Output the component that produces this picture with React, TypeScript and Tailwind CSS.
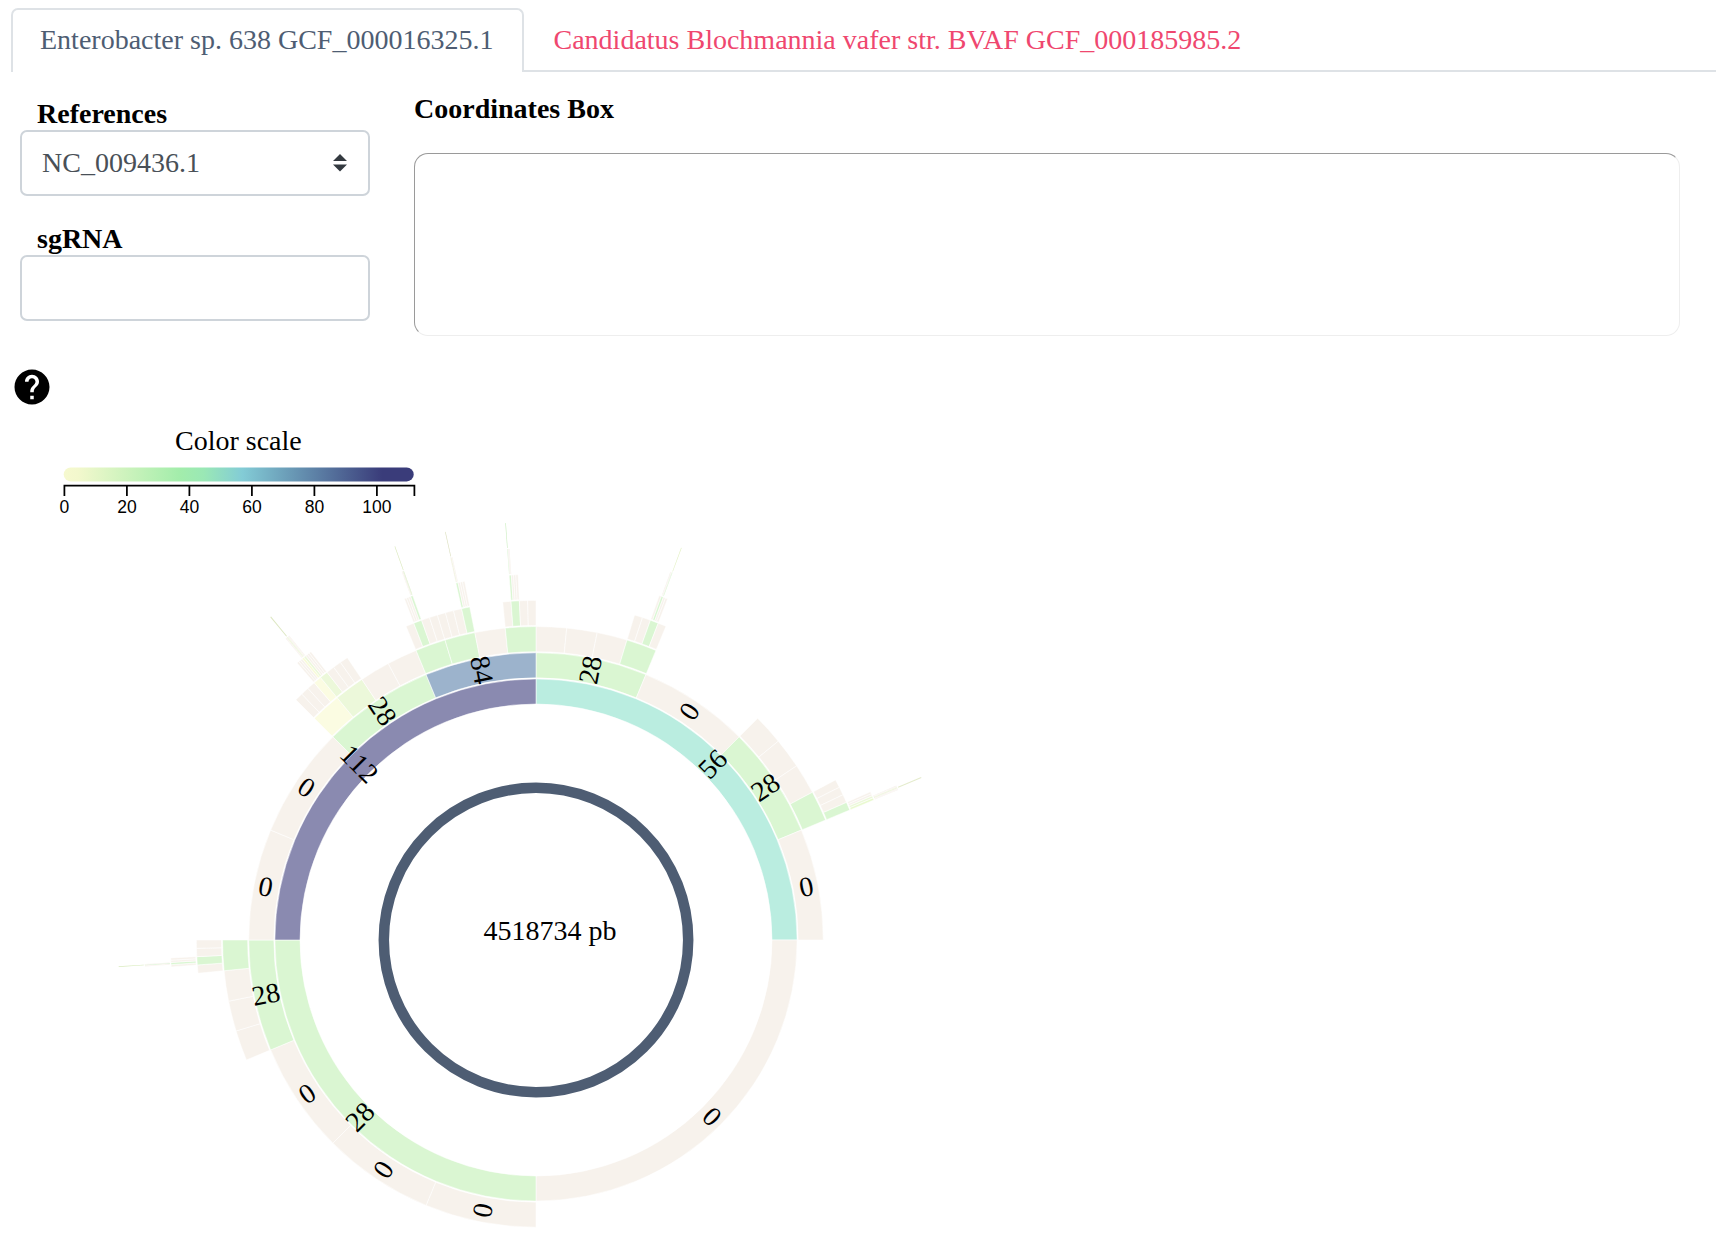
import React from "react";
import { MdHelp } from "react-icons/md";

const BEIGE = "#f7f2ec";
const GREEN = "#daf6d2";
const TEAL = "#baede0";
const BLUE = "#9cb3cc";
const PURPLE = "#8a8ab0";
const YELLOW = "#fbfce2";
const LIME = "#ecf8da";

const CX = 536;
const CY = 530;
const Q = 22.5;
const S = Q / 4;
const T = S / 4;
const U = T / 4;
const V = U / 4;

type Arc = { ring: number; from: number; step: number; fills: string[] };

// Each entry is a run of equal slices, clockwise from twelve o'clock.
const arcs: Arc[] = [
  { ring: 0, from: 0, step: 90, fills: [TEAL, BEIGE, GREEN, PURPLE] },
  { ring: 1, from: 0, step: Q, fills: [GREEN, BEIGE, GREEN, BEIGE] },
  {
    ring: 1,
    from: 180,
    step: Q,
    fills: [BEIGE, BEIGE, BEIGE, GREEN, BEIGE, BEIGE, GREEN, BLUE],
  },
  { ring: 2, from: 0, step: S, fills: [BEIGE, BEIGE, BEIGE, GREEN] },
  { ring: 2, from: 45, step: S, fills: [BEIGE, BEIGE, BEIGE, GREEN] },
  { ring: 2, from: 247.5, step: S, fills: [BEIGE, BEIGE, BEIGE, GREEN] },
  {
    ring: 2,
    from: 315,
    step: S,
    fills: [YELLOW, LIME, BEIGE, BEIGE, GREEN, GREEN, BEIGE, GREEN],
  },
  { ring: 3, from: 3 * S, step: T, fills: [BEIGE, BEIGE, GREEN, BEIGE] },
  { ring: 3, from: 45 + 3 * S, step: T, fills: [BEIGE, BEIGE, BEIGE, GREEN] },
  { ring: 3, from: 247.5 + 3 * S, step: T, fills: [BEIGE, GREEN, BEIGE, BEIGE] },
  {
    ring: 3,
    from: 315,
    step: T,
    fills: [BEIGE, BEIGE, BEIGE, YELLOW, LIME, BEIGE, BEIGE, BEIGE],
  },
  {
    ring: 3,
    from: 337.5,
    step: T,
    fills: [BEIGE, GREEN, BEIGE, BEIGE, BEIGE, BEIGE, BEIGE, GREEN],
  },
  { ring: 3, from: 360 - S, step: T, fills: [BEIGE, GREEN, BEIGE, BEIGE] },
  { ring: 4, from: 3 * S + 2 * T, step: U, fills: [BEIGE, GREEN, BEIGE, BEIGE] },
  { ring: 4, from: 67.5 - T, step: U, fills: [BEIGE, BEIGE, LIME, "#e9f9cf"] },
  { ring: 4, from: 247.5 + 3 * S + T, step: U, fills: [BEIGE, GREEN, BEIGE, BEIGE] },
  {
    ring: 4,
    from: 315 + 3 * T,
    step: U,
    fills: [BEIGE, BEIGE, BEIGE, "#f8fbd8", LIME, BEIGE, BEIGE, BEIGE],
  },
  { ring: 4, from: 337.5 + T, step: U, fills: [BEIGE, BEIGE, BEIGE, GREEN] },
  { ring: 4, from: 348.75 - T, step: U, fills: [GREEN, BEIGE, BEIGE, BEIGE] },
  { ring: 4, from: 360 - S + T, step: U, fills: [GREEN, BEIGE, BEIGE, BEIGE] },
];

// The two outermost rings hold slices under three pixels wide.
const slivers: Arc[] = [
  { ring: 5, from: 3 * S + 2 * T + U, step: V, fills: [BEIGE, BEIGE, BEIGE, GREEN] },
  {
    ring: 5,
    from: 67.5 - 2 * U,
    step: V,
    fills: [BEIGE, BEIGE, BEIGE, "#eaf3d2", "#e8f2cf", BEIGE, BEIGE, BEIGE],
  },
  { ring: 5, from: 247.5 + 3 * S + T + U, step: V, fills: [BEIGE, BEIGE, "#c8f0c0", BEIGE] },
  {
    ring: 5,
    from: 320.625 - U,
    step: V,
    fills: [BEIGE, BEIGE, BEIGE, "#eaf3d2", LIME, BEIGE, BEIGE, BEIGE],
  },
  { ring: 5, from: 337.5 + 2 * T - U, step: V, fills: [BEIGE, BEIGE, "#e6ecd2", "#dceec8"] },
  { ring: 5, from: 348.75 - T, step: V, fills: [BEIGE, "#e8efcf", BEIGE, BEIGE] },
  { ring: 5, from: 360 - S + T, step: V, fills: [GREEN, BEIGE, BEIGE, BEIGE] },
  { ring: 6, from: 3 * S + 2 * T + U + 3 * V, step: V, fills: ["#dfefba"] },
  { ring: 6, from: 67.5 - U - V, step: V * 1.7, fills: ["#e2eac8"] },
  { ring: 6, from: 247.5 + 3 * S + T + U + 2 * V, step: V, fills: ["#d2e8b2"] },
  { ring: 6, from: 320.625 - V, step: V * 1.7, fills: ["#dce6c0"] },
  { ring: 6, from: 337.5 + 2 * T - V, step: V, fills: ["#d6e6b4"] },
  { ring: 6, from: 348.75 - T + V, step: V, fills: ["#d8dcb8"] },
  { ring: 6, from: 360 - S + T, step: V, fills: ["#c4ecb8"] },
];

const labels: [number, number, string][] = [
  [0, 45, "56"],
  [0, 135, "0"],
  [0, 225, "28"],
  [0, 315, "112"],
  [1, 11.25, "28"],
  [1, 33.75, "0"],
  [1, 56.25, "28"],
  [1, 78.75, "0"],
  [1, 191.25, "0"],
  [1, 213.75, "0"],
  [1, 236.25, "0"],
  [1, 258.75, "28"],
  [1, 281.25, "0"],
  [1, 303.75, "0"],
  [1, 326.25, "28"],
  [1, 348.75, "84"],
];

function point(r: number, deg: number) {
  const a = (deg * Math.PI) / 180;
  return `${(r * Math.sin(a)).toFixed(3)} ${(-r * Math.cos(a)).toFixed(3)}`;
}

function slicePath(ring: number, a0: number, a1: number) {
  const r0 = 236 + ring * 26.17;
  const r1 = 261.1 + ring * 26.17;
  return `M${point(r0, a0)}L${point(r1, a0)}A${r1} ${r1} 0 0 1 ${point(r1, a1)}L${point(r0, a1)}A${r0} ${r0} 0 0 0 ${point(r0, a0)}Z`;
}

function Slices({ items, strokeWidth }: { items: Arc[]; strokeWidth: number }) {
  return (
    <g stroke="#fff" strokeOpacity={0.6} strokeWidth={strokeWidth}>
      {items.flatMap((arc, i) =>
        arc.fills.map((fill, j) => (
          <path
            key={`${i}-${j}`}
            fill={fill}
            d={slicePath(arc.ring, arc.from + j * arc.step, arc.from + (j + 1) * arc.step)}
          />
        )),
      )}
    </g>
  );
}

function Legend() {
  return (
    <g>
      <defs>
        <linearGradient id="scale">
          <stop offset="0" stopColor="#f6f9cf" />
          <stop offset="0.04" stopColor="#f3f8cd" />
          <stop offset="0.33" stopColor="#a3edab" />
          <stop offset="0.4" stopColor="#9ae8b5" />
          <stop offset="0.51" stopColor="#83ccd6" />
          <stop offset="0.91" stopColor="#3a3c7a" />
          <stop offset="1" stopColor="#3a3c7a" />
        </linearGradient>
      </defs>
      <text x={175} y={39.5} fontSize={28}>
        Color scale
      </text>
      <rect x={63.7} y={57.4} width={350} height={14} rx={7} fill="url(#scale)" />
      <path
        d="M64.4 86V75.7H414.4V86M126.9 75.7V86M189.4 75.7V86M251.9 75.7V86M314.4 75.7V86M376.9 75.7V86"
        fill="none"
        stroke="#000"
        strokeWidth={1.75}
      />
      <g fontSize={17.5} textAnchor="middle" className="font-['Liberation_Sans',Arial,sans-serif]">
        {[0, 20, 40, 60, 80, 100].map((v) => (
          <text key={v} x={64.4 + v * 3.125} y={102.8}>
            {v}
          </text>
        ))}
      </g>
    </g>
  );
}

function Sunburst() {
  return (
    <g transform={`translate(${CX} ${CY})`}>
      <Slices items={arcs} strokeWidth={0.9} />
      <Slices items={slivers} strokeWidth={0.2} />
      <circle r={152.2} fill="none" stroke="#4e5d73" strokeWidth={10.5} />
      <g fontSize={28} textAnchor="middle">
        {labels.map(([ring, angle, value]) => (
          <text
            key={`${ring}-${angle}`}
            dy="0.35em"
            transform={`rotate(${angle - 90}) translate(${249.4 + ring * 26.17}) rotate(${angle < 180 ? 0 : 180})`}
          >
            {value}
          </text>
        ))}
        <text x={14} y={0}>
          4518734 pb
        </text>
      </g>
    </g>
  );
}

export default function App() {
  return (
    <main className="h-[1237px] w-full overflow-hidden bg-white font-['Liberation_Serif','Times_New_Roman',serif] text-[28px] leading-8 text-black">
      <nav className="flex h-[72px] pt-2">
        <div className="w-[11px]" />
        <a className="h-16 w-[513px] whitespace-nowrap rounded-t-[7px] border-2 border-b-0 border-[#dee2e6] pl-[27px] pt-3.5 text-[#4e5d73]">
          Enterobacter sp. 638 GCF_000016325.1
        </a>
        <a className="h-16 flex-1 whitespace-nowrap border-b-2 border-[#dee2e6] pl-[29.5px] pt-4 text-[#ef476f]">
          Candidatus Blochmannia vafer str. BVAF GCF_000185985.2
        </a>
      </nav>

      <section className="flex h-[293px] pl-5">
        <div className="flex w-[350px] flex-col">
          <label className="mt-[26px] h-8 pl-[17px] font-bold">References</label>
          <div className="flex h-[66px] items-center justify-between rounded-[7px] border-2 border-[#ced4da] pl-5 pr-[21px] text-[#495057]">
            <span>NC_009436.1</span>
            <svg viewBox="0 0 4 5" className="h-[17.5px] w-3.5" fill="#343a40">
              <path d="M2 0L0 2h4zm0 5L0 3h4z" />
            </svg>
          </div>
          <label className="mt-[27px] h-8 pl-[17px] font-bold">sgRNA</label>
          <input className="h-[66px] w-full rounded-[7px] border-2 border-[#ced4da] px-5 outline-none" />
        </div>
        <div className="ml-11 flex w-[1266px] flex-col pt-[21px]">
          <h2 className="font-bold">Coordinates Box</h2>
          <div className="mt-7 h-[183px] rounded-[14px] border border-b-[#eeeeee] border-l-[#9a9a9a] border-r-[#eeeeee] border-t-[#9a9a9a]" />
        </div>
      </section>

      <div className="flex h-[45px] pl-[11px]">
        <MdHelp className="mt-[0.7px] h-[42px] w-[42px]" />
      </div>

      <svg viewBox="0 0 1716 827" className="block h-[827px] w-[1716px]">
        <Legend />
        <Sunburst />
      </svg>
    </main>
  );
}
